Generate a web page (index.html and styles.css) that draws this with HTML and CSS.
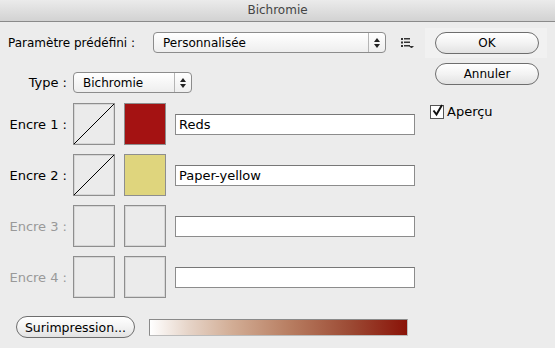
FILE: index.html
```html
<!DOCTYPE html>
<html lang="fr">
<head>
    <meta charset="UTF-8">
    <title>Bichromie</title>
    <link rel="stylesheet" href="styles.css">
</head>
<body>
    <div class="titlebar">Bichromie</div>

    <div class="dialog">
        <div class="main">
            <div class="preset-row">
                <span class="label">Paramètre prédéfini :</span>
                <div class="select preset-select">
                    <span>Personnalisée</span>
                    <span class="arrows"><i class="up"></i><i class="down"></i></span>
                </div>
                <svg class="list-icon" width="13" height="10" viewBox="0 0 13 10">
                    <rect x="0" y="0" width="2" height="2" fill="#333"/>
                    <rect x="3" y="0" width="6" height="1.5" fill="#333"/>
                    <rect x="0" y="3.5" width="2" height="2" fill="#333"/>
                    <rect x="3" y="3.5" width="6" height="1.5" fill="#333"/>
                    <rect x="0" y="7" width="2" height="2" fill="#333"/>
                    <rect x="3" y="7" width="6" height="1.5" fill="#333"/>
                    <polygon points="8,8 13,8 10.5,10.5" fill="#333"/>
                </svg>
            </div>

            <div class="type-row">
                <span class="ink-label">Type :</span>
                <div class="select type-select">
                    <span>Bichromie</span>
                    <span class="arrows"><i class="up"></i><i class="down"></i></span>
                </div>
            </div>

            <div class="inks">
                <div class="ink">
                    <span class="ink-label">Encre 1 :</span>
                    <div class="swatch curve">
                        <svg width="40" height="40" viewBox="0 0 40 40"><line x1="0" y1="40" x2="40" y2="0" stroke="#000" stroke-width="1"/></svg>
                    </div>
                    <div class="swatch red"></div>
                    <div class="field">Reds</div>
                </div>
                <div class="ink">
                    <span class="ink-label">Encre 2 :</span>
                    <div class="swatch curve">
                        <svg width="40" height="40" viewBox="0 0 40 40"><line x1="0" y1="40" x2="40" y2="0" stroke="#000" stroke-width="1"/></svg>
                    </div>
                    <div class="swatch yellow"></div>
                    <div class="field">Paper-yellow</div>
                </div>
                <div class="ink disabled">
                    <span class="ink-label">Encre 3 :</span>
                    <div class="swatch"></div>
                    <div class="swatch"></div>
                    <div class="field"></div>
                </div>
                <div class="ink disabled">
                    <span class="ink-label">Encre 4 :</span>
                    <div class="swatch"></div>
                    <div class="swatch"></div>
                    <div class="field"></div>
                </div>
            </div>

            <div class="bottom-row">
                <button class="pill small">Surimpression...</button>
                <div class="ramp"></div>
            </div>
        </div>

        <div class="side">
            <div class="default-wrap">
                <button class="pill wide">OK</button>
            </div>
            <button class="pill wide">Annuler</button>
            <label class="check">
                <span class="box">
                    <svg width="13" height="13" viewBox="0 0 13 13"><path d="M2.5 6.5 L5.5 10.5 L11 1" fill="none" stroke="#111" stroke-width="2"/></svg>
                </span>
                Aperçu
            </label>
        </div>
    </div>
</body>
</html>
```

FILE: styles.css
```css
body {
    margin: 0;
    background-color: #ececec;
    font-family: "DejaVu Sans", Verdana, sans-serif;
    font-size: 12px;
    color: #000;
    width: 555px;
    height: 348px;
    overflow: hidden;
}
.titlebar {
    height: 21px;
    line-height: 21px;
    border-bottom: 1px solid #8a8a8a;
    background: linear-gradient(#ebebeb, #d2d2d2);
    text-align: center;
    color: #444;
    font-size: 12px;
}
.dialog {
    display: flex;
}
.main {
    width: 425px;
    flex-shrink: 0;
    padding: 10px 0 0 8px;
    box-sizing: border-box;
}
.preset-row {
    display: flex;
    align-items: center;
    height: 21px;
}
.preset-row .label {
    width: 145px;
    flex-shrink: 0;
}
.select {
    height: 19px;
    border: 1px solid #8c8c8c;
    border-radius: 4px;
    background: linear-gradient(#ffffff, #eeeeee);
    display: flex;
    align-items: center;
    justify-content: space-between;
    padding-left: 9px;
    box-sizing: content-box;
    flex-shrink: 0;
}
.arrows {
    width: 16px;
    height: 19px;
    border-left: 1px solid #b5b5b5;
    display: flex;
    flex-direction: column;
    align-items: center;
    justify-content: center;
    gap: 2px;
}
.arrows i {
    width: 0;
    height: 0;
    border-left: 3px solid transparent;
    border-right: 3px solid transparent;
}
.arrows .up {
    border-bottom: 4px solid #222;
}
.arrows .down {
    border-top: 4px solid #222;
}
.preset-select {
    width: 222px;
}
.list-icon {
    margin-left: 15px;
}
.type-row {
    display: flex;
    align-items: center;
    margin-top: 19px;
    height: 21px;
}
.type-select {
    width: 108px;
}
.ink-label {
    width: 65px;
    flex-shrink: 0;
    white-space: nowrap;
    text-align: right;
    padding-right: 6px;
    box-sizing: border-box;
    font-size: 13px;
}
.inks {
    display: flex;
    flex-direction: column;
    gap: 9px;
    margin-top: 10px;
}
.ink {
    display: flex;
    align-items: center;
    height: 42px;
}
.ink.disabled .ink-label {
    color: #999;
}
.swatch {
    width: 40px;
    height: 40px;
    flex-shrink: 0;
    border: 1px solid #8e8e8e;
    box-shadow: inset 0 0 0 1px #d6d6d6;
    background: #ebebeb;
    margin-right: 9px;
}
.swatch svg {
    display: block;
}
.swatch.red {
    background: #a41212;
    box-shadow: none;
}
.swatch.yellow {
    background: #dfd57d;
    box-shadow: none;
}
.field {
    width: 235px;
    height: 19px;
    line-height: 19px;
    border: 1px solid #8c8c8c;
    border-top-color: #777;
    background: #fff;
    padding-left: 3px;
    box-sizing: content-box;
    flex-shrink: 0;
    font-size: 13px;
}
.bottom-row {
    display: flex;
    align-items: center;
    margin-top: 18px;
    padding-left: 8px;
}
.pill {
    font-family: "DejaVu Sans", Verdana, sans-serif;
    font-size: 12px;
    color: #000;
    height: 22px;
    border: 1px solid #6e6e6e;
    border-radius: 11px;
    background: linear-gradient(#ffffff, #f3f3f3 50%, #e2e2e2);
    padding: 0;
}
.pill.small {
    width: 119px;
    font-size: 12.5px;
}
.ramp {
    margin-left: 14px;
    width: 257px;
    height: 15px;
    border: 1px solid #8a8a8a;
    border-right-color: #bbb;
    border-bottom-color: #bbb;
    background: linear-gradient(to right, #ffffff 0%, #e6d4c8 15%, #d2ad95 32%, #b77c60 55%, #9c4a34 78%, #8a1308 100%);
}
.side {
    display: flex;
    flex-direction: column;
    padding-top: 6px;
}
.default-wrap {
    width: 102px;
    padding: 4px 10px 4px 10px;
    background: #f1f1f1;
}
.pill.wide {
    width: 104px;
}
.side > .pill.wide {
    margin: 5px 0 0 10px;
}
.check {
    display: flex;
    align-items: center;
    margin: 19px 0 0 5px;
    font-size: 13px;
}
.check .box {
    width: 12px;
    height: 12px;
    border: 1px solid #555;
    background: #fff;
    margin-right: 3px;
    position: relative;
}
.check .box svg {
    position: absolute;
    left: 0;
    top: -2px;
}
```
